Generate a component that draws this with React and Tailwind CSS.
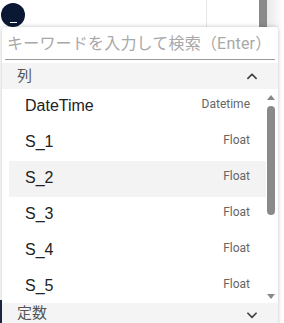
import { useState } from "react";

const columns = [
  { name: "DateTime", type: "Datetime" },
  { name: "S_1", type: "Float" },
  { name: "S_2", type: "Float" },
  { name: "S_3", type: "Float" },
  { name: "S_4", type: "Float" },
  { name: "S_5", type: "Float" },
];

function Chevron({ up }) {
  return (
    <svg width="14" height="14" viewBox="0 0 24 24" fill="none" stroke="#444" strokeWidth="3" strokeLinecap="round" strokeLinejoin="round">
      {up ? <path d="M5 16l7-7 7 7" /> : <path d="M5 9l7 7 7-7" />}
    </svg>
  );
}

export default function App() {
  const [hovered] = useState("S_2");

  return (
    <div
      className="relative w-[284px] h-[323px] overflow-hidden bg-white"
      style={{ fontFamily: 'Roboto, "Noto Sans CJK JP", sans-serif' }}
    >
      {/* page behind the menu */}
      <div className="flex h-[27px]">
        <div className="w-[207px] pl-px pt-[3px] border-r border-[#e6e6e6]">
          <div className="w-[24px] h-[24px] rounded-full bg-[#0b1833] flex items-end justify-center pb-[4px]">
            <div className="w-[7px] h-px bg-white" />
          </div>
        </div>
        <div className="w-[52px]" />
        <div className="w-[8px] bg-[#8a8a8a]" />
        <div className="flex-1 bg-gradient-to-r from-[#e9e9e9] to-white" />
      </div>
      <div className="absolute left-0 top-[300px] w-[2px] h-[23px] bg-[#1d2a44]" />

      {/* dropdown */}
      <div className="absolute left-[2px] top-[27px] w-[276px] h-[300px] bg-white rounded-t-[3px] shadow-[0_0_4px_rgba(0,0,0,0.25)] flex flex-col">
        <div className="mx-[3px] h-[33px] border-b border-[#9a9a9a] flex items-center pl-[2px] pt-[1px]">
          <span className="text-[16px] text-[#a8a8a8] tracking-[0.2px]">キーワードを入力して検索（Enter）</span>
        </div>
        <div className="mt-[3px] h-[26px] bg-[#f4f4f4] flex items-center justify-between pl-[15px] pr-[19px]">
          <span className="text-[15px] text-[#555]">列</span>
          <Chevron up />
        </div>
        <div className="flex h-[214px]">
          <div className="w-[264px] pl-[7px]">
            {columns.map((c) => (
              <div
                key={c.name}
                className={`h-[36px] flex justify-between pl-[16px] pr-[16px] ${
                  hovered === c.name ? "bg-[#f3f3f3]" : ""
                }`}
              >
                <span className="text-[16px] text-[#222] leading-[36px] -mt-px font-['Liberation_Sans',Arial,sans-serif]">
                  {c.name}
                </span>
                <span className="text-[12px] text-[#666] pt-[6px]">{c.type}</span>
              </div>
            ))}
          </div>
          <div className="w-[10px] flex flex-col items-center pt-[6px] pb-[4px]">
            <div className="w-0 h-0 border-l-[4px] border-r-[4px] border-b-[5px] border-l-transparent border-r-transparent border-b-[#888]" />
            <div className="mt-[6px] w-[8px] h-[109px] rounded-[4px] bg-[#8a8a8a]" />
            <div className="flex-1" />
            <div className="w-0 h-0 border-l-[4px] border-r-[4px] border-t-[5px] border-l-transparent border-r-transparent border-t-[#888]" />
          </div>
        </div>
        <div className="h-[22px] bg-[#f4f4f4] flex items-start justify-between pl-[15px] pr-[19px]">
          <span className="text-[15px] leading-[20px] text-[#555]">定数</span>
          <span className="pt-[5px]">
            <Chevron />
          </span>
        </div>
      </div>
    </div>
  );
}
